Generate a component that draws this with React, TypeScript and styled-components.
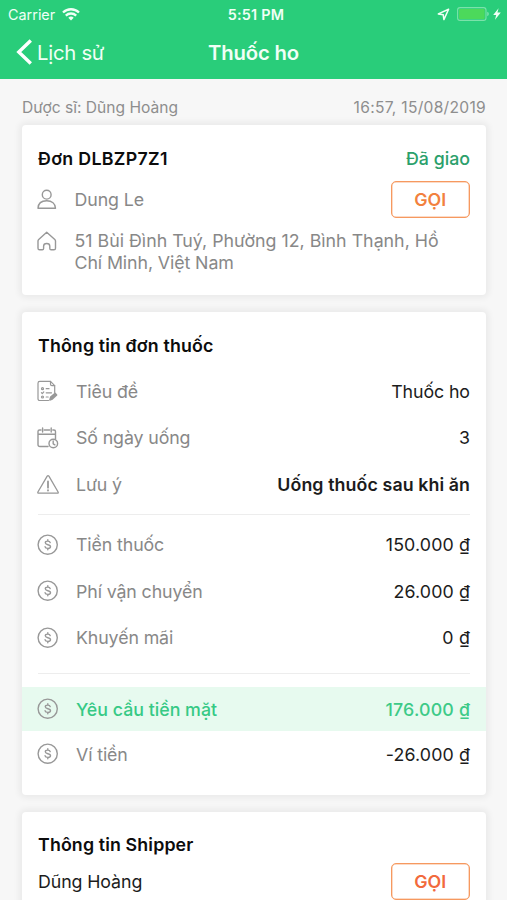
import React from "react";
import styled, { createGlobalStyle } from "styled-components";

const GlobalStyle = createGlobalStyle`
  *, *::before, *::after { box-sizing: border-box; }
  html, body { margin: 0; background: #f7f7f7; }
  body {
    height: 900px;
    overflow: hidden;
    font-family: Inter, "Noto Sans", sans-serif;
    font-size: 17.8px;
    color: #1c1c1c;
  }
`;

const Screen = styled.div`
  height: 900px;
  overflow: hidden;
`;

const Header = styled.header`
  height: 79px;
  background: #29cd7a;
  color: #f0fff6;
`;

const StatusBar = styled.div`
  display: grid;
  grid-template-columns: 1fr auto 1fr;
  align-items: center;
  height: 28px;
  padding: 0 6px 0 8px;
  font-size: 14.4px;
`;

const Carrier = styled.div`
  display: flex;
  align-items: center;
  gap: 7px;
`;

const Clock = styled.div`
  font-weight: 600;
  letter-spacing: 0.25px;
  padding-left: 3px;
`;

const StatusIcons = styled.div`
  display: flex;
  justify-content: flex-end;
  align-items: center;
  gap: 3px;
`;

const LocationSlot = styled.span`
  display: flex;
  margin-right: 4px;
`;

const NavBar = styled.nav`
  display: grid;
  grid-template-columns: 1fr auto 1fr;
  align-items: center;
  height: 48px;
  padding: 0 16px;
`;

const BackLink = styled.div`
  display: flex;
  align-items: center;
  gap: 5px;
  font-size: 20.3px;
  letter-spacing: -0.25px;
`;

const Title = styled.h1`
  margin: 0;
  font-size: 20.3px;
  font-weight: 600;
  letter-spacing: -0.15px;
`;

const Meta = styled.div`
  display: flex;
  justify-content: space-between;
  align-items: center;
  height: 46px;
  padding: 10px 21px 0 22px;
  font-size: 15.6px;
  color: #8e8e8e;
`;

const Timestamp = styled.span`
  letter-spacing: 0.28px;
`;

const Cards = styled.main`
  display: flex;
  flex-direction: column;
  gap: 17px;
  padding: 0 21px 0 22px;
`;

const Card = styled.section<{ $height: number }>`
  flex: none;
  height: ${(p) => p.$height}px;
  padding-top: 20px;
  border-radius: 4px;
  background: #fff;
  box-shadow: 0 0 6px 3px rgba(0, 0, 0, 0.055);
`;

const CardHead = styled.div`
  display: flex;
  justify-content: space-between;
  align-items: center;
  height: 26px;
  padding: 0 16px;
`;

const CardTitle = styled.h2<{ $spacing?: number }>`
  margin: 0;
  font-size: 17.8px;
  font-weight: 600;
  color: #0c0c0c;
  letter-spacing: ${(p) => p.$spacing ?? 0.14}px;
`;

const Delivered = styled.span`
  font-weight: 500;
  color: #2ba06b;
`;

const ContactRow = styled.div<{ $top: number }>`
  display: flex;
  align-items: center;
  height: 37px;
  margin-top: ${(p) => p.$top}px;
  padding: 0 16px 0 15px;
`;

const IconSlot = styled.span<{ $width: number }>`
  flex: none;
  display: flex;
  width: ${(p) => p.$width}px;
  color: #989898;
`;

const Name = styled.span<{ $dark?: boolean }>`
  flex: 1;
  padding-left: ${(p) => (p.$dark ? 1 : 0)}px;
  color: ${(p) => (p.$dark ? "#1c1c1c" : "#888")};
  letter-spacing: -0.1px;
`;

const CallButton = styled.button<{ $tone: string }>`
  width: 79.5px;
  height: 37px;
  padding: 0;
  border: 1.5px solid #f6995f;
  border-radius: 5px;
  box-shadow: inset 0 0 0 0.5px #f9b78f;
  background: #fff;
  font: 600 17.8px Inter, sans-serif;
  letter-spacing: 0.1px;
  color: ${(p) => p.$tone};
`;

const AddressRow = styled.div`
  display: flex;
  margin-top: 12px;
  padding: 0 16px 0 15px;
  line-height: 21.5px;
  color: #888;
`;

const AddressLine = styled.span<{ $spacing: number }>`
  display: block;
  letter-spacing: ${(p) => p.$spacing}px;
`;

const HomeSlot = styled(IconSlot)`
  padding-top: 1px;
`;

const Details = styled.div`
  padding-top: 10px;
`;

const Row = styled.div<{ $highlight?: boolean }>`
  display: flex;
  align-items: center;
  height: ${(p) => (p.$highlight ? 44 : 46.5)}px;
  padding: 0 16px 0 15px;
  background: ${(p) => (p.$highlight ? "#e7faef" : "transparent")};
`;

const Label = styled.span<{ $highlight?: boolean }>`
  flex: 1;
  font-weight: ${(p) => (p.$highlight ? 500 : 400)};
  letter-spacing: ${(p) => (p.$highlight ? 0 : -0.12)}px;
  color: ${(p) => (p.$highlight ? "#36c985" : "#888")};
`;

const Value = styled.span<{ $weight?: number; $spacing?: number; $highlight?: boolean }>`
  font-weight: ${(p) => p.$weight ?? 400};
  letter-spacing: ${(p) => p.$spacing ?? 0}px;
  margin-right: ${(p) => -(p.$spacing ?? 0)}px;
  color: ${(p) => (p.$highlight ? "#3dca88" : "#1c1c1c")};
`;

const Divider = styled.hr<{ $top: number; $bottom: number }>`
  height: 1px;
  margin: ${(p) => p.$top}px 16px ${(p) => p.$bottom}px;
  border: 0;
  background: #ededed;
`;

const line = {
  fill: "none",
  stroke: "currentColor",
  strokeWidth: 1.4,
  strokeLinecap: "round" as const,
  strokeLinejoin: "round" as const,
};

const WifiIcon = () => (
  <svg width="18" height="13" viewBox="0 0 18 13" fill="none" stroke="currentColor" strokeWidth="2.3">
    <path d="M1 4.5a11.5 11.5 0 0 1 16 0M3.8 7.6a7.5 7.5 0 0 1 10.4 0" />
    <path d="M6.3 9.7a4 4 0 0 1 5.4 0L9 12.5z" fill="currentColor" stroke="none" />
  </svg>
);

const LocationIcon = () => (
  <svg width="13" height="13" viewBox="0 0 13 13" fill="none" stroke="currentColor" strokeWidth="1.5" strokeLinejoin="round">
    <path d="M11.6 1.3 1.3 5.9l4.9.8.7 4.9z" />
  </svg>
);

const BatteryIcon = () => (
  <svg width="33" height="14" viewBox="0 0 33 14">
    <rect x="0.6" y="0.6" width="28.4" height="12.8" rx="2.4" fill="none" stroke="#7be2aa" strokeWidth="1.1" />
    <rect x="2" y="2" width="25.6" height="10" rx="1" fill="#4cd95b" />
    <path d="M30.2 4.8q1.7.6 1.7 2.2t-1.7 2.2z" fill="#7be2aa" />
  </svg>
);

const BoltIcon = () => (
  <svg width="8" height="12" viewBox="0 0 8 12" fill="currentColor">
    <path d="M5.600.2.200 6.900h3L2 11.800l5.800-7.200H4.400z" />
  </svg>
);

const BackIcon = () => (
  <svg width="16" height="26" viewBox="0 0 16 26" fill="none" stroke="#fff" strokeWidth="3.4">
    <path d="M14.800 1.500 2.800 13l12 11.500" />
  </svg>
);

const PersonIcon = () => (
  <svg width="20" height="21" viewBox="0 0 20 21" {...line}>
    <circle cx="9.7" cy="5.7" r="4.4" />
    <path d="M1 19.2c.2-4.6 3.5-7.5 8.7-7.5s8.600 2.900 8.800 7.500z" />
  </svg>
);

const HomeIcon = () => (
  <svg width="20" height="20" viewBox="0 0 20 20" {...line}>
    <path d="M9.700 1.200 1.700 8.500Q1 9.200 1 10v7.200q0 1.600 1.600 1.600h2.700q1.300 0 1.300-1.300v-2.300q0-2.700 3.100-2.700t3.100 2.700v2.300q0 1.300 1.300 1.300h2.800q1.600 0 1.600-1.600V10q0-.8-.7-1.500z" />
  </svg>
);

const NoteIcon = () => (
  <svg width="22" height="22" viewBox="0 0 22 22" {...line} strokeWidth={1.2}>
    <path d="M11.500 20.500H2.800Q1 20.500 1 18.700V3.200Q1 1.400 2.800 1.400H13.500L17.700 5.600V12.500" />
    <path d="M13.500 1.400v2.800q0 1.400 1.400 1.400h2.800M9.200 8.700H12M9.200 12.800h5.300M9.200 17h2" />
    <circle cx="5.500" cy="8.700" r="1" />
    <path d="m4.400 12.700.9.900 1.500-1.700" />
    <circle cx="5.500" cy="17" r="1" />
    <path d="m12.800 20 .8-2.900 4.500-3.800 1.600 1.700-4.300 4zM14.200 18.400l4-3.500" strokeWidth="1.400" />
  </svg>
);

const CalendarIcon = () => (
  <svg width="22" height="22" viewBox="0 0 22 22" {...line}>
    <path d="M11 19.500H3Q1 19.500 1 17.500V4.600Q1 3 2.600 3H4M7.200 3H12.600M15.800 3h1.100q1.600 0 1.600 1.600V12M1 7.300h17.500M5.600 1v4M14.200 1v4" />
    <circle cx="16.300" cy="16.500" r="4.300" />
    <path d="M16.200 13.900v2.900l1.700 1" />
  </svg>
);

const WarningIcon = () => (
  <svg width="22" height="21" viewBox="0 0 22 21" {...line} strokeWidth={1.3}>
    <path d="M10.200 2.200.9 18q-.4 1.100.7 1.100h18.900q1.100 0 .6-1.100L11.900 2.200q-.9-1.300-1.700 0z" />
    <path d="M11 7.500v6.200M11 16.100v.4" strokeWidth="1.800" />
  </svg>
);

const CoinIcon = () => (
  <svg width="22" height="22" viewBox="0 0 22 22" {...line}>
    <circle cx="10.700" cy="10.700" r="9.600" />
    <path d="M13.200 8.600c-.2-1-1.200-1.500-2.500-1.500-1.400 0-2.400.6-2.400 1.700 0 2.600 5.200 1.200 5.200 3.900 0 1.100-1.200 1.700-2.700 1.700-1.400 0-2.500-.6-2.700-1.600M10.800 5.800v1.300M10.800 14.400v1.300" strokeWidth="1.400" />
  </svg>
);

type Entry = {
  icon: React.ReactNode;
  label: string;
  value: string;
  weight?: number;
  spacing?: number;
  highlight?: boolean;
};

const details: Entry[] = [
  { icon: <NoteIcon />, label: "Tiêu đề", value: "Thuốc ho", spacing: -0.1 },
  { icon: <CalendarIcon />, label: "Số ngày uống", value: "3" },
  { icon: <WarningIcon />, label: "Lưu ý", value: "Uống thuốc sau khi ăn", weight: 600, spacing: 0.1 },
];

const costs: Entry[] = [
  { icon: <CoinIcon />, label: "Tiền thuốc", value: "150.000 ₫", spacing: 0.15 },
  { icon: <CoinIcon />, label: "Phí vận chuyển", value: "26.000 ₫", spacing: 0.15 },
  { icon: <CoinIcon />, label: "Khuyến mãi", value: "0 ₫", spacing: 0.3 },
];

const payments: Entry[] = [
  { icon: <CoinIcon />, label: "Yêu cầu tiền mặt", value: "176.000 ₫", weight: 500, spacing: 0.2, highlight: true },
  { icon: <CoinIcon />, label: "Ví tiền", value: "-26.000 ₫", spacing: 0.15 },
];

const Rows = ({ entries }: { entries: Entry[] }) => (
  <>
    {entries.map((e) => (
      <Row key={e.label} $highlight={e.highlight}>
        <IconSlot $width={39}>{e.icon}</IconSlot>
        <Label $highlight={e.highlight}>{e.label}</Label>
        <Value $weight={e.weight} $spacing={e.spacing} $highlight={e.highlight}>{e.value}</Value>
      </Row>
    ))}
  </>
);

export default function App() {
  return (
    <Screen>
      <GlobalStyle />
      <Header>
        <StatusBar>
          <Carrier>
            <span>Carrier</span>
            <WifiIcon />
          </Carrier>
          <Clock>5:51 PM</Clock>
          <StatusIcons>
            <LocationSlot><LocationIcon /></LocationSlot>
            <BatteryIcon />
            <BoltIcon />
          </StatusIcons>
        </StatusBar>
        <NavBar>
          <BackLink>
            <BackIcon />
            <span>Lịch sử</span>
          </BackLink>
          <Title>Thuốc ho</Title>
        </NavBar>
      </Header>
      <Meta>
        <span>Dược sĩ: Dũng Hoàng</span>
        <Timestamp>16:57, 15/08/2019</Timestamp>
      </Meta>
      <Cards>
        <Card $height={170}>
          <CardHead>
            <CardTitle $spacing={0.32}>Đơn DLBZP7Z1</CardTitle>
            <Delivered>Đã giao</Delivered>
          </CardHead>
          <ContactRow $top={10}>
            <IconSlot $width={37.5}><PersonIcon /></IconSlot>
            <Name>Dung Le</Name>
            <CallButton $tone="#f2813e">GỌI</CallButton>
          </ContactRow>
          <AddressRow>
            <HomeSlot $width={37.5}><HomeIcon /></HomeSlot>
            <div>
              <AddressLine $spacing={0}>51 Bùi Đình Tuý, Phường 12, Bình Thạnh, Hồ</AddressLine>
              <AddressLine $spacing={-0.1}>Chí Minh, Việt Nam</AddressLine>
            </div>
          </AddressRow>
        </Card>
        <Card $height={482.5}>
          <CardHead>
            <CardTitle>Thông tin đơn thuốc</CardTitle>
          </CardHead>
          <Details>
            <Rows entries={details} />
          </Details>
          <Divider $top={6} $bottom={7} />
          <Rows entries={costs} />
          <Divider $top={12} $bottom={13} />
          <Rows entries={payments} />
        </Card>
        <Card $height={120}>
          <CardHead>
            <CardTitle>Thông tin Shipper</CardTitle>
          </CardHead>
          <ContactRow $top={5}>
            <Name $dark>Dũng Hoàng</Name>
            <CallButton $tone="#f26a3c">GỌI</CallButton>
          </ContactRow>
        </Card>
      </Cards>
    </Screen>
  );
}
